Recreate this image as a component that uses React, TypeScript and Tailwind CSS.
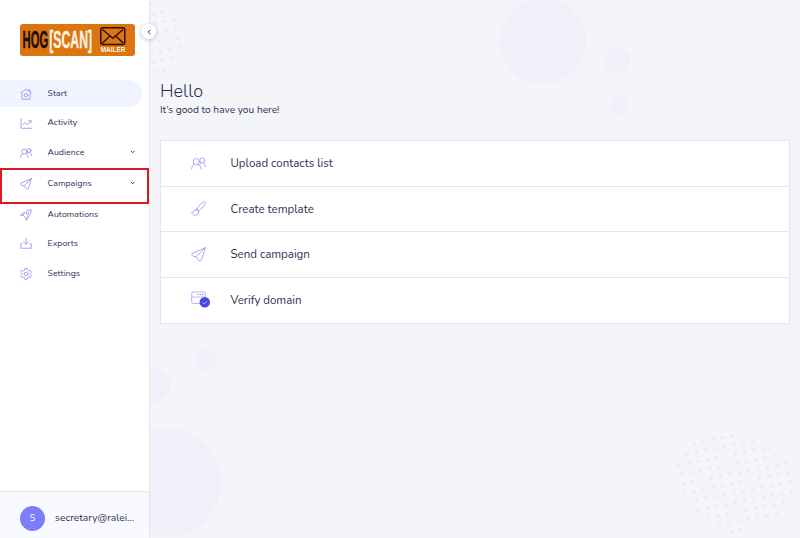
import React from "react";

type IconProps = { className?: string };

function Svg({ className, children, box = "0 0 24 24" }: IconProps & { children: React.ReactNode; box?: string }) {
  return (
    <svg viewBox={box} className={className} fill="none" stroke="currentColor" strokeWidth={1.6} strokeLinecap="round" strokeLinejoin="round">
      {children}
    </svg>
  );
}

const HomeIcon = (p: IconProps) => (
  <Svg {...p}>
    <path d="M1.500 9 12 2.500 22.500 9M4 10v12.500h16V10M17 4h3v3" />
    <circle cx="12" cy="14.500" r="3.500" />
  </Svg>
);
const ActivityIcon = (p: IconProps) => (
  <Svg {...p}>
    <path d="M2 3v19.500h21M6 15.500l4-4.500 4 4.500 8-8M17.500 7.500H22v4.500" />
  </Svg>
);
const PeopleIcon = (p: IconProps) => (
  <Svg {...p}>
    <circle cx="8.500" cy="9" r="5" />
    <circle cx="18" cy="7" r="4" />
    <path d="M1 21c0-4 2-6.500 4.500-7.500M16 21c0-4-2-6.500-4.500-7.500M14.500 13.500c.500-1.500 1-2 1.800-3M19.700 10.600c2 1 3.300 3 3.300 6.400" />
  </Svg>
);
const PlaneIcon = (p: IconProps) => (
  <Svg {...p}>
    <path d="M23 1 1.500 10.500c-.500 2 .500 4 2.500 4.500l4.500.500L23 1l-6.500 20.500c-1 1.500-2.500 1.500-3.500.500l-4.500-6.500" />
  </Svg>
);
const RocketIcon = (p: IconProps) => (
  <Svg {...p}>
    <path d="M22 2c-6-.500-12 2.500-15.500 10.500l5.500 5.500c8-4 10.500-10 10-16ZM9.500 7.500C5 7 2 9 1.500 13l5-.500M16.500 14.500c.500 4.500-1.500 7.500-5 8l.500-4.500" />
    <circle cx="15" cy="9" r="2.300" />
  </Svg>
);
const ExportIcon = (p: IconProps) => (
  <Svg {...p} box="0 2 24 24">
    <path d="M12 0v14.500M7 9.500l5 5 5-5M4 13.500H1.500v9h21v-9H20" />
  </Svg>
);
const GearIcon = (p: IconProps) => (
  <Svg {...p}>
    <path d="m9.500 1.500-.700 3-2.500 1.400-3-.900-2 3.500 2.200 2.200v2.600L1.300 15.500l2 3.500 3-.900 2.500 1.400.700 3h5l.700-3 2.500-1.400 3 .900 2-3.500-2.200-2.200v-2.600l2.200-2.200-2-3.500-3 .900-2.500-1.400-.700-3Z" />
    <circle cx="12" cy="12" r="3.700" />
  </Svg>
);
const BrushIcon = (p: IconProps) => (
  <Svg {...p}>
    <path d="M9.500 12.500C13 7 17 3 20.500 1c2-.700 3 .700 2.300 2.500C21 8 17 12 12.500 16M9.500 12.500l3 3.500M8 14c-3-.300-4 1.500-4.500 3C3 18.500 2 18.500 1 18c.500 3 3 5 6 4.700 3.500-.300 5.500-2.500 5-5.200-.500-2-2-3.500-4-3.500Z" />
  </Svg>
);
const DomainIcon = ({ className }: IconProps) => (
  <svg viewBox="0 0 20 18" className={className} fill="none">
    <rect x=".700" y="1" width="13.500" height="11.500" rx="1.300" stroke="#b5b3f5" strokeWidth="1" />
    <path d="M.700 6h13.500" stroke="#b5b3f5" strokeWidth=".9" />
    <path d="M6.500 3.500h6" stroke="#8a88d0" strokeWidth="1.200" strokeDasharray="1.400 .8" />
    <circle cx="13.800" cy="11.300" r="5.200" fill="#4845e6" />
    <path d="m11.700 11.600 1.400 1.300 2.900-2.800" stroke="#c5c4ff" strokeWidth=".9" />
  </svg>
);
const Chevron = ({ className }: IconProps) => (
  <svg viewBox="0 0 6 4" className={className} fill="none" stroke="currentColor" strokeWidth="1">
    <path d="m.900.700 2.100 2.100L5.100.700" />
  </svg>
);

function Logo() {
  return (
    <div className="ml-5 mt-[24px] h-8 w-[115px] shrink-0 rounded-[3px] bg-[#dc750f]">
      <svg viewBox="0 0 115 32" className="h-8 w-[115px]" fontFamily="'Liberation Sans',Arial,sans-serif" fontWeight="700">
        <text transform="translate(2.600 24.300) scale(.462 1)" fontSize="24.300" fill="#1d0d05" stroke="#1d0d05" strokeWidth=".500">HOG</text>
        <text transform="translate(29.200 24.300) scale(.505 1)" fontSize="24.300" fill="#fff5e6" stroke="#fff5e6" strokeWidth=".300">[SCAN]</text>
        <g fill="none" stroke="#2a1205" strokeWidth="1.500">
          <rect x="80.800" y="3.700" width="24" height="16.800" rx="2" />
          <path d="m82.500 5.500 10.300 8.700 10.300-8.700M82.500 19l7.500-7M103.200 19l-7.500-7" />
        </g>
        <text transform="translate(80.800 27.900) scale(.888 1)" fontSize="7.200" fill="#fff5e6">MAILER</text>
      </svg>
    </div>
  );
}

const menu = [
  { label: "Start", Icon: HomeIcon, row: "h-[27px] rounded-r-full bg-[#f1f3ff] mr-[7px]" },
  { label: "Activity", Icon: ActivityIcon, row: "h-[31px]" },
  { label: "Audience", Icon: PeopleIcon, row: "h-[29px]", sub: true },
  { label: "Campaigns", Icon: PlaneIcon, row: "h-[33px]", sub: true },
  { label: "Automations", Icon: RocketIcon, row: "h-[29px]" },
  { label: "Exports", Icon: ExportIcon, row: "h-[29px]" },
  { label: "Settings", Icon: GearIcon, row: "h-[31px]" },
];

const actions = [
  { label: "Upload contacts list", Icon: PeopleIcon },
  { label: "Create template", Icon: BrushIcon },
  { label: "Send campaign", Icon: PlaneIcon },
  { label: "Verify domain", Icon: DomainIcon },
];

// Each entry holds the first dot of a row (x, y) and how many dots follow the slope.
const dotRows = [
  [24.3, 23, 5], [17, 34, 8], [9.3, 45, 10], [11.3, 54.3, 11], [13.3, 63.7, 12], [15, 73, 12],
  [26.3, 80.3, 11], [28, 90, 11], [39, 97.3, 9], [50, 104.7, 7], [61.3, 111.7, 2],
];

function DotCloud({ className }: IconProps) {
  return (
    <svg viewBox="0 0 130 118" className={className} fill="#ebecf2">
      {dotRows.flatMap(([x, y, n], r) =>
        Array.from({ length: n }, (_, i) => <circle key={`${r}-${i}`} cx={x + i * 9.33} cy={y - i * 1.84} r="1.8" />)
      )}
    </svg>
  );
}

function Backdrop() {
  return (
    <div className="pointer-events-none absolute inset-0 overflow-hidden">
      <svg viewBox="150 0 650 538" className="h-full w-full" fill="#f0f0fa" stroke="#eff0f8" strokeWidth="1">
        <circle cx="542.800" cy="41" r="42.500" />
        <circle cx="617" cy="60.500" r="12.500" />
        <circle cx="619.300" cy="105.500" r="8" />
        <circle cx="206.300" cy="360.500" r="10" />
        <circle cx="153.500" cy="385" r="16.200" />
        <circle cx="167" cy="482.500" r="53.500" />
      </svg>
      <DotCloud className="absolute left-[520px] top-[420px] h-[118px] w-[130px]" />
      <DotCloud className="absolute -left-[92px] -top-[24px] h-[118px] w-[130px]" />
    </div>
  );
}

export default function App() {
  return (
    <div className="relative flex h-[538px] w-[800px] overflow-hidden bg-[#f4f5f9] font-['Nunito','Open_Sans','Noto_Sans',sans-serif] text-[#302f55]">
      <aside className="flex w-[150px] shrink-0 flex-col border-r border-[#e4e6ee] bg-white">
        <Logo />
        <nav className="mt-6 flex flex-col">
          {menu.map(({ label, Icon, row, sub }) => (
            <div key={label} className={`flex items-center pl-5 ${row}`}>
              <Icon className="size-[12px] shrink-0 text-[#9290e8]" />
              <span className="ml-[15.500px] pb-[1.500px] text-[8.800px] leading-3">{label}</span>
              {sub && <Chevron className="mb-px ml-auto mr-[14px] h-[4px] w-[5.500px]" />}
            </div>
          ))}
        </nav>
        <div className="mt-auto flex h-[47px] items-center border-t border-[#e9eaf2] bg-[#f9faff] pl-5 pt-[7px]">
          <div className="flex size-[25px] items-center justify-center rounded-full bg-[#7d7dfb] text-[9px] text-white">S</div>
          <span className="ml-[10px] text-[10.250px]">secretary@ralei...</span>
        </div>
      </aside>
      <main className="relative flex-1">
        <Backdrop />
        <div className="relative pl-[10px] pr-[10px] pt-[80px]">
          <h1 className="text-[18px] font-light leading-[22px]">Hello</h1>
          <p className="text-[10.200px] leading-[16px]">It’s good to have you here!</p>
          <ul className="mt-[22px] h-[184px] rounded-[2px] border border-[#e4e6ed] bg-white shadow-[0_0_1px_#e4e6ed]">
            {actions.map(({ label, Icon }, i) => (
              <li key={label} className={`flex items-center pl-[29.500px] ${i < 3 ? "h-[45.500px] border-b border-[#e5e7ed]" : "h-[45px]"}`}>
                <span className="w-[40px] shrink-0">
                  <Icon className={i === 3 ? "h-[18px] w-[20px]" : "size-[15px] text-[#aaa8f5]"} />
                </span>
                <span className="pt-px text-[11.500px]">{label}</span>
              </li>
            ))}
          </ul>
        </div>
      </main>
      <div className="absolute left-0 top-[168px] h-[36px] w-[149px] border-2 border-[#dc1820]" />
      <button className="absolute left-[141px] top-[24px] flex size-[15px] items-center justify-center rounded-full bg-white shadow-[0_1px_4px_#b9bccb]">
        <Chevron className="h-[4px] w-[6px] rotate-90" />
      </button>
    </div>
  );
}
